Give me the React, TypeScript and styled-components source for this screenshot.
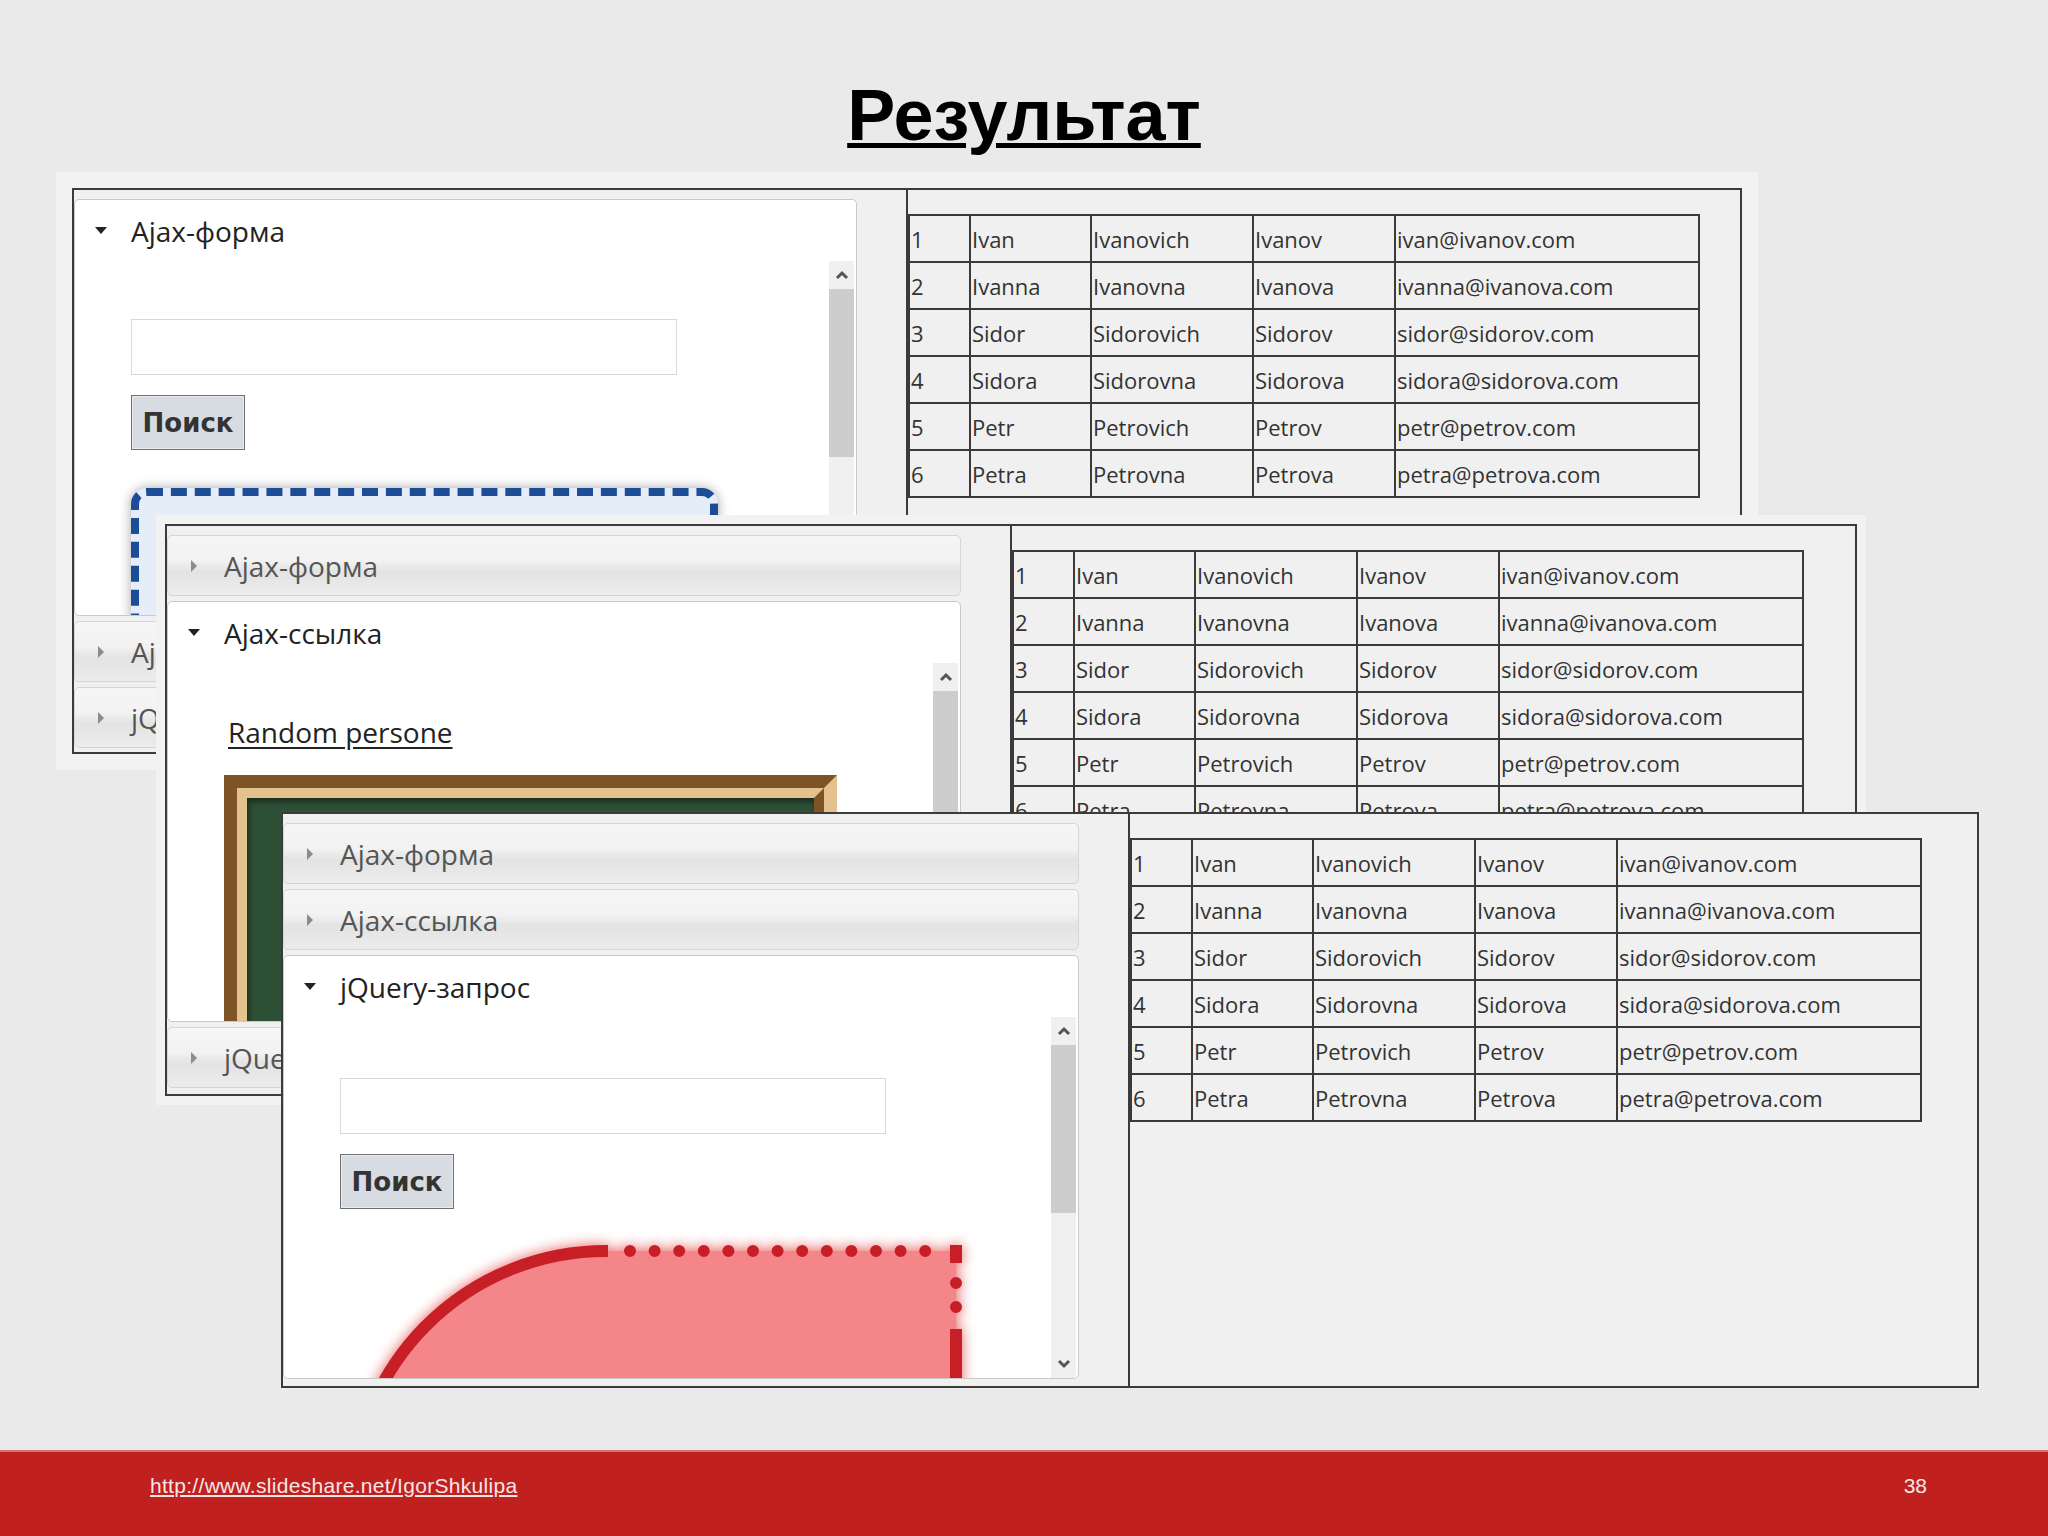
import React from 'react';
import styled, { createGlobalStyle } from 'styled-components';

const GlobalStyle = createGlobalStyle`
  html, body {
    margin: 0;
    padding: 0;
  }
  body {
    background: #eaeaea;
    font-family: 'Open Sans', 'Noto Sans', sans-serif;
  }
`;

const people = [
  ['1', 'Ivan', 'Ivanovich', 'Ivanov', 'ivan@ivanov.com'],
  ['2', 'Ivanna', 'Ivanovna', 'Ivanova', 'ivanna@ivanova.com'],
  ['3', 'Sidor', 'Sidorovich', 'Sidorov', 'sidor@sidorov.com'],
  ['4', 'Sidora', 'Sidorovna', 'Sidorova', 'sidora@sidorova.com'],
  ['5', 'Petr', 'Petrovich', 'Petrov', 'petr@petrov.com'],
  ['6', 'Petra', 'Petrovna', 'Petrova', 'petra@petrova.com'],
];

const colWidths = [61, 121, 162, 142, 304];
const sections = ['Ajax-форма', 'Ajax-ссылка', 'jQuery-запрос'];

interface ShotProps {
  x: number;
  y: number;
  w: number;
  h: number;
  spread: number;
  leftWidth: number;
  accWidth: number;
  active: number;
  panelHeight: number;
  contentTop: number;
  children: React.ReactNode;
}

const ScreenShot: React.FC<ShotProps> = ({
  x, y, w, h, spread, leftWidth, accWidth, active, panelHeight, contentTop, children,
}) => (
  <Shot $x={x} $y={y} $w={w} $h={h} $spread={spread}>
    <LeftCol $w={leftWidth}>
      <Accordion $w={accWidth}>
        {sections.map((title, i) =>
          i === active ? (
            <ActivePanel key={title} $h={panelHeight}>
              <ActiveHeader>
                <Caret $open />
                {title}
              </ActiveHeader>
              <PanelBody>
                <PanelContent $pt={contentTop}>{children}</PanelContent>
                <Scrollbar>
                  <ScrollArrow>
                    <svg width="14" height="10" viewBox="0 0 14 10">
                      <path d="M2 8 L7 3 L12 8" fill="none" stroke="#555" strokeWidth="3" />
                    </svg>
                  </ScrollArrow>
                  <Thumb />
                  <ScrollSpacer />
                  <ScrollArrow>
                    <svg width="14" height="10" viewBox="0 0 14 10">
                      <path d="M2 2 L7 7 L12 2" fill="none" stroke="#555" strokeWidth="3" />
                    </svg>
                  </ScrollArrow>
                </Scrollbar>
              </PanelBody>
            </ActivePanel>
          ) : (
            <SectionHeader key={title}>
              <Caret />
              {title}
            </SectionHeader>
          )
        )}
      </Accordion>
    </LeftCol>
    <RightCol>
      <Table>
        <colgroup>
          {colWidths.map((cw, i) => (
            <col key={i} style={{ width: cw }} />
          ))}
        </colgroup>
        <tbody>
          {people.map((row) => (
            <tr key={row[0]}>
              {row.map((cell, i) => (
                <td key={i}>{cell}</td>
              ))}
            </tr>
          ))}
        </tbody>
      </Table>
    </RightCol>
  </Shot>
);

const SearchForm: React.FC = () => (
  <>
    <SearchInput type="text" readOnly />
    <SearchButton type="button">Поиск</SearchButton>
  </>
);

// rounded block with mixed border styles (solid arc, dotted top, dash-dot right)
const RedShape: React.FC = () => (
  <RedSvg width="616" height="320" viewBox="0 0 616 320">
    <path d="M6 320 L6 266 A254 254 0 0 1 260 6 L610 6 L610 320 Z" fill="#f4868a" />
    <path d="M6 330 L6 266 A254 254 0 0 1 262 6" fill="none" stroke="#c81f27" strokeWidth="12" />
    <path d="M284 6 L593 6" fill="none" stroke="#c81f27" strokeWidth="12" strokeLinecap="round" strokeDasharray="0 24.6" />
    <path d="M610 0 L610 18" fill="none" stroke="#c81f27" strokeWidth="12" />
    <path d="M610 38 L610 63" fill="none" stroke="#c81f27" strokeWidth="12" strokeLinecap="round" strokeDasharray="0 24" />
    <path d="M610 84 L610 320" fill="none" stroke="#c81f27" strokeWidth="12" />
  </RedSvg>
);

const App: React.FC = () => (
  <Page>
    <GlobalStyle />
    <TitleBar>
      <Title>Результат</Title>
    </TitleBar>
    <Canvas>
      <ScreenShot x={72} y={18} w={1670} h={566} spread={16} leftWidth={834} accWidth={783} active={0} panelHeight={417} contentTop={58}>
        <SearchForm />
        <BlueBox />
      </ScreenShot>
      <ScreenShot x={165} y={354} w={1692} h={572} spread={9} leftWidth={845} accWidth={794} active={1} panelHeight={421} contentTop={50}>
        <RandomLink>Random persone</RandomLink>
        <WoodFrame>
          <Chalkboard />
        </WoodFrame>
      </ScreenShot>
      <ScreenShot x={281} y={642} w={1698} h={576} spread={0} leftWidth={847} accWidth={796} active={2} panelHeight={424} contentTop={61}>
        <SearchForm />
        <RedShape />
      </ScreenShot>
    </Canvas>
    <Footer>
      <FooterLink>http://www.slideshare.net/IgorShkulipa</FooterLink>
      <PageNumber>38</PageNumber>
    </Footer>
  </Page>
);

export default App;

const Page = styled.div`
  width: 2048px;
  height: 1536px;
  display: flex;
  flex-direction: column;
  background: #eaeaea;
  overflow: hidden;
`;

const TitleBar = styled.header`
  height: 170px;
  box-sizing: border-box;
  padding-top: 79px;
  display: flex;
  justify-content: center;
`;

const Title = styled.h1`
  margin: 0;
  font: bold 72px/72px 'Liberation Sans', Arial, sans-serif;
  color: #000;
  text-decoration: underline;
  text-decoration-thickness: 5px;
  text-underline-offset: 3px;
`;

const Canvas = styled.main`
  position: relative;
  flex: 1;
`;

const Shot = styled.section<{ $x: number; $y: number; $w: number; $h: number; $spread: number }>`
  position: absolute;
  left: ${(p) => p.$x}px;
  top: ${(p) => p.$y}px;
  width: ${(p) => p.$w}px;
  height: ${(p) => p.$h}px;
  box-sizing: border-box;
  border: 2px solid #3b3b3b;
  background: #f0f0f0;
  box-shadow: 0 0 0 ${(p) => p.$spread}px #f2f2f2;
  display: flex;
  overflow: hidden;
`;

const LeftCol = styled.div<{ $w: number }>`
  width: ${(p) => p.$w}px;
  flex-shrink: 0;
  box-sizing: border-box;
  border-right: 2px solid #3b3b3b;
  padding-top: 9px;
  overflow: hidden;
`;

const RightCol = styled.div`
  flex: 1;
  padding-top: 24px;
`;

const Accordion = styled.div<{ $w: number }>`
  width: ${(p) => p.$w}px;
  display: flex;
  flex-direction: column;
  gap: 5px;
  font-family: 'Open Sans', 'Noto Sans', sans-serif;
  font-size: 28px;
`;

const SectionHeader = styled.div`
  height: 61px;
  flex-shrink: 0;
  box-sizing: border-box;
  display: flex;
  align-items: center;
  gap: 24px;
  padding-left: 20px;
  border: 1px solid #d5d5d5;
  border-radius: 5px;
  background: linear-gradient(#f6f6f6 0%, #f2f2f2 42%, #e3e3e3 60%, #ececec 100%);
  color: #555;
`;

const ActivePanel = styled.div<{ $h: number }>`
  height: ${(p) => p.$h}px;
  flex-shrink: 0;
  box-sizing: border-box;
  display: flex;
  flex-direction: column;
  border: 1px solid #c9c9c9;
  border-radius: 5px;
  background: #fff;
  overflow: hidden;
`;

const ActiveHeader = styled.div`
  height: 61px;
  flex-shrink: 0;
  display: flex;
  align-items: center;
  gap: 24px;
  padding-left: 20px;
  color: #222;
`;

const Caret = styled.span<{ $open?: boolean }>`
  width: 12px;
  height: 12px;
  display: flex;
  align-items: center;
  justify-content: center;
  &::before {
    content: '';
    ${(p) =>
      p.$open
        ? `border-top: 7px solid #222; border-left: 6px solid transparent; border-right: 6px solid transparent;`
        : `border-left: 6px solid #8c8c8c; border-top: 6px solid transparent; border-bottom: 6px solid transparent;`}
  }
`;

const PanelBody = styled.div`
  flex: 1;
  min-height: 0;
  display: flex;
`;

const PanelContent = styled.div<{ $pt: number }>`
  flex: 1;
  overflow: hidden;
  padding: ${(p) => p.$pt}px 0 0 56px;
`;

const Scrollbar = styled.div`
  width: 25px;
  margin-right: 2px;
  flex-shrink: 0;
  display: flex;
  flex-direction: column;
  background: #f0f0f0;
`;

const ScrollArrow = styled.div`
  height: 28px;
  display: flex;
  align-items: center;
  justify-content: center;
`;

const Thumb = styled.div`
  height: 168px;
  background: #cdcdcd;
`;

const ScrollSpacer = styled.div`
  flex: 1;
`;

const SearchInput = styled.input`
  display: block;
  width: 546px;
  height: 56px;
  box-sizing: border-box;
  border: 1px solid #d9d9d9;
  background: #fff;
  outline: none;
`;

const SearchButton = styled.button`
  display: block;
  margin-top: 20px;
  width: 114px;
  height: 55px;
  box-sizing: border-box;
  background: #d6dce2;
  border: 1px solid #6f6f6f;
  box-shadow: inset 0 0 0 1px #e9edf1;
  font: bold 26px 'DejaVu Sans', Verdana, sans-serif;
  color: #333;
  padding: 0;
`;

const BlueBox = styled.div`
  margin-top: 38px;
  width: 587px;
  height: 300px;
  box-sizing: border-box;
  border: 8px dashed #1e4d98;
  border-radius: 16px;
  background: #e5edf9;
  box-shadow: 0 0 12px rgba(0, 0, 0, 0.35);
`;

const RandomLink = styled.div`
  padding-left: 4px;
  font-size: 28px;
  line-height: 38px;
  color: #222;
  text-decoration: underline;
  text-underline-offset: 4px;
`;

const WoodFrame = styled.div`
  margin-top: 24px;
  width: 613px;
  height: 320px;
  box-sizing: border-box;
  border: 13px solid;
  border-color: #7d5426 #e3c28e #e3c28e #7d5426;
`;

const Chalkboard = styled.div`
  height: 100%;
  box-sizing: border-box;
  border: 10px solid;
  border-color: #e3c28e #7d5426 #7d5426 #e3c28e;
  background: #2e5037;
  box-shadow: inset 2px 4px 6px rgba(0, 0, 0, 0.45);
`;

const RedSvg = styled.svg`
  display: block;
  margin: 36px 0 0 6px;
  overflow: visible;
  filter: drop-shadow(0 0 7px rgba(225, 40, 40, 0.75));
`;

const Table = styled.table`
  border-collapse: collapse;
  table-layout: fixed;
  font-family: 'Open Sans', 'Noto Sans', sans-serif;
  font-size: 22px;
  color: #333;

  td {
    height: 47px;
    box-sizing: border-box;
    border: 2px solid #3a3a3a;
    padding: 0 0 0 1px;
    white-space: nowrap;
    overflow: hidden;
  }
`;

const Footer = styled.footer`
  height: 86px;
  flex-shrink: 0;
  box-sizing: border-box;
  display: flex;
  justify-content: space-between;
  align-items: flex-start;
  padding: 22px 121px 0 150px;
  background: #c0201e;
  border-top: 2px solid #d4716d;
  font: 21px 'Liberation Sans', Arial, sans-serif;
  color: #f6e6e6;
`;

const FooterLink = styled.span`
  text-decoration: underline;
  letter-spacing: 0.3px;
`;

const PageNumber = styled.span`
  font-size: 21px;
`;
